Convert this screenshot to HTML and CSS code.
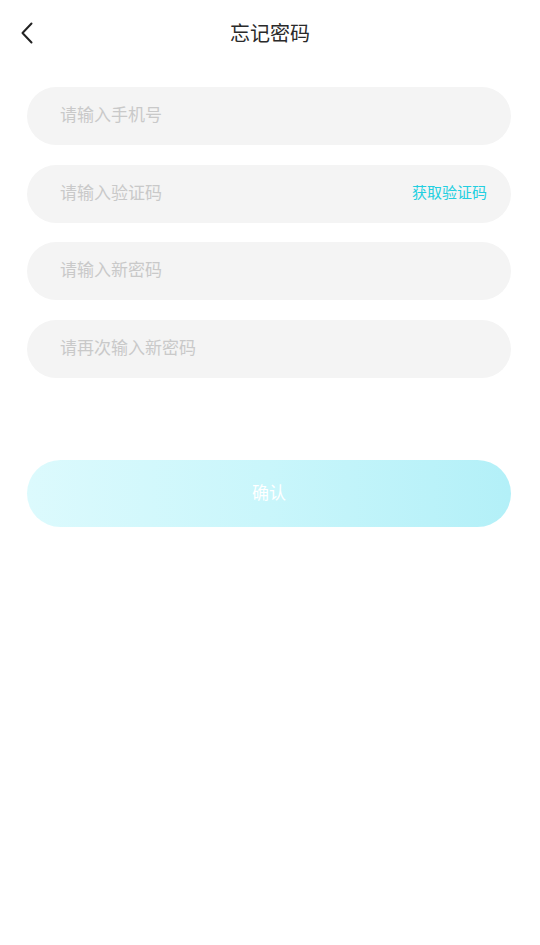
FILE: index.html
```html
<!DOCTYPE html>
<html lang="zh">
<head>
<meta charset="utf-8">
<link rel="stylesheet" href="styles.css">
</head>
<body>
<div class="page">
  <header class="nav">
    <svg class="back" width="14" height="22" viewBox="0 0 14 22"><path d="M11.5 1.5 L2.5 11 L11.5 20.5" fill="none" stroke="#222" stroke-width="2" stroke-linecap="round" stroke-linejoin="round"/></svg>
    <h1 class="title">忘记密码</h1>
  </header>
  <form class="form">
    <div class="field"><span class="ph">请输入手机号</span></div>
    <div class="field"><span class="ph">请输入验证码</span><span class="code">获取验证码</span></div>
    <div class="field"><span class="ph">请输入新密码</span></div>
    <div class="field"><span class="ph">请再次输入新密码</span></div>
    <div class="btn">确认</div>
  </form>
</div>
</body>
</html>
```
FILE: styles.css
```css
html, body { margin: 0; padding: 0; background: #fff; }
body { font-family: "Noto Sans CJK SC", "Noto Sans", sans-serif; }
.page { width: 540px; }
.nav { position: relative; height: 66px; display: flex; align-items: center; justify-content: center; }
.back { position: absolute; left: 20px; top: 22px; }
.title { margin: 0; font-size: 20px; font-weight: 400; color: #2a2a2a; line-height: 1; }
.form { padding: 21px 29px 0 27px; display: flex; flex-direction: column; gap: 19.5px; }
.field { box-sizing: border-box; height: 58px; border-radius: 29px; background: #f4f4f4; display: flex; align-items: center; justify-content: space-between; padding: 0 24px 5px 33px; }
.ph { font-size: 17px; color: #c9c9c9; }
.code { font-size: 15px; color: #22cfe0; }
.btn { box-sizing: border-box; margin-top: 62.5px; height: 67px; border-radius: 34px; background: linear-gradient(90deg, #dcfafd 0%, #c9f6fb 50%, #b3f0f8 100%); color: #fff; font-size: 17px; display: flex; align-items: center; justify-content: center; padding-bottom: 4px; }
```
